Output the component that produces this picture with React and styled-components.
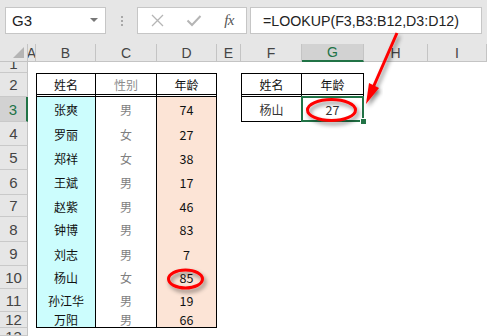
import styled, { createGlobalStyle } from "styled-components";

const GlobalStyle = createGlobalStyle`
  html, body { margin: 0; padding: 0; background: #fff; }
  body { font-family: "Liberation Sans", Arial, sans-serif; }
  * { box-sizing: border-box; }
`;

const COLS = ["A", "B", "C", "D", "E", "F", "G", "H", "I"];
const COL_W = "28px 8px 60px 61px 60px 24px 61px 62px 64px 1fr";
const ROW_H = "18px 11px 24px 25px 24px 24px 25px 22px 25px 24px 23px 23px 16px 1fr";

const people = [
  ["张爽", "男", 74],
  ["罗丽", "女", 27],
  ["郑祥", "女", 38],
  ["王斌", "男", 17],
  ["赵紫", "男", 46],
  ["钟博", "男", 83],
  ["刘志", "男", 7],
  ["杨山", "女", 85],
  ["孙江华", "男", 19],
  ["万阳", "男", 66],
];

const App = () => {
  return (
    <>
      <GlobalStyle />
      <Window>
        <TopBar>
          <NameBox>
            G3
            <Caret />
          </NameBox>
          <Grip>
            <i />
            <i />
            <i />
          </Grip>
          <IconBox>
            <svg width="13" height="13" viewBox="0 0 13 13">
              <path d="M1 1 L12 12 M12 1 L1 12" stroke="#b5b5b5" strokeWidth="1.3" fill="none" />
            </svg>
            <svg width="16" height="13" viewBox="0 0 16 13">
              <path d="M1.5 6.5 L6 11 L14.5 2" stroke="#b5b5b5" strokeWidth="2" fill="none" />
            </svg>
            <Fx>fx</Fx>
          </IconBox>
          <FormulaBox>=LOOKUP(F3,B3:B12,D3:D12)</FormulaBox>
        </TopBar>

        <Sheet>
          <Corner>
            <svg width="11" height="11" viewBox="0 0 11 11">
              <polygon points="11,0 11,11 0,11" fill="#b4b4b4" />
            </svg>
          </Corner>
          {COLS.map((c) => (
            <ColHead key={c} $active={c === "G"}>
              {c}
            </ColHead>
          ))}
          {Array.from({ length: 13 }, (_, i) => i + 1).map((n) => (
            <RowHead
              key={n}
              $active={n === 3}
              $align={n === 1 ? "flex-end" : n === 13 ? "flex-start" : "center"}
            >
              <span>{n}</span>
            </RowHead>
          ))}

          <DataTable $cols="60px 61px 60px" style={{ gridColumn: "3 / 6", gridRow: "3 / 14" }}>
            <Cell $first $head>姓名</Cell>
            <Cell $head $color="#8c8c8c">性别</Cell>
            <Cell $head>年龄</Cell>
            {people.map(([name, sex, age], i) => {
              const last = i === people.length - 1;
              return [
                <Cell key={name + "n"} $first $last={last} $bg="#ccfdfd">{name}</Cell>,
                <Cell key={name + "s"} $last={last} $color="#7f7f7f">{sex}</Cell>,
                <Cell key={name + "a"} $last={last} $bg="#fce4d6" $num>{age}</Cell>,
              ];
            })}
          </DataTable>

          <DataTable $cols="61px 62px" style={{ gridColumn: "7 / 9", gridRow: "3 / 5" }}>
            <Cell $first $head>姓名</Cell>
            <Cell $head>年龄</Cell>
            <Cell $first $last $color="#333">杨山</Cell>
            <Cell $last $num $color="#333">
              27
              <Selection>
                <Handle />
              </Selection>
            </Cell>
          </DataTable>
        </Sheet>

        <Marks width="487" height="336" viewBox="0 0 487 336">
          <defs>
            <filter id="sh" x="-30%" y="-30%" width="160%" height="160%">
              <feDropShadow dx="2" dy="3" stdDeviation="2" floodColor="#000" floodOpacity="0.45" />
            </filter>
          </defs>
          <g filter="url(#sh)" fill="none" stroke="#ff0000" strokeWidth="3">
            <line x1="397" y1="33" x2="372" y2="90" />
            <ellipse cx="185.5" cy="279" rx="17" ry="9" />
            <ellipse cx="331.5" cy="110" rx="24" ry="10.5" />
          </g>
          <polygon filter="url(#sh)" points="366,104 379,88 369,83" fill="#ff0000" />
        </Marks>
      </Window>
    </>
  );
};

export default App;

// css starts from here

const Window = styled.div`
  position: relative;
  width: 487px;
  height: 336px;
  overflow: hidden;
  background: #fff;
`;

const TopBar = styled.div`
  display: flex;
  align-items: flex-start;
  height: 44px;
  padding: 7px 5px 0 5px;
  background: #e6e6e6;
`;

const Box = styled.div`
  height: 27px;
  background: #fff;
  border: 1px solid #c6c6c6;
  display: flex;
  align-items: center;
`;

const NameBox = styled(Box)`
  position: relative;
  width: 101px;
  padding-left: 6px;
  font-size: 15px;
  color: #222;
`;

const Caret = styled.span`
  position: absolute;
  right: 7px;
  top: 10px;
  border-left: 4px solid transparent;
  border-right: 4px solid transparent;
  border-top: 4px solid #777;
`;

const Grip = styled.div`
  width: 31px;
  height: 27px;
  display: flex;
  flex-direction: column;
  align-items: center;
  justify-content: center;
  gap: 2px;

  i {
    width: 2px;
    height: 2px;
    background: #a8a8a8;
  }
`;

const IconBox = styled(Box)`
  width: 110px;
  padding: 0 12px 0 13px;
  justify-content: space-between;
`;

const Fx = styled.span`
  font-family: "Liberation Serif", "Times New Roman", serif;
  font-style: italic;
  font-size: 15px;
  color: #555;
  letter-spacing: -0.5px;
`;

const FormulaBox = styled(Box)`
  flex: 1;
  margin-left: 3px;
  padding-left: 12px;
  font-size: 14.2px;
  color: #222;
`;

const Sheet = styled.div`
  display: grid;
  grid-template-columns: ${COL_W};
  grid-template-rows: ${ROW_H};
  height: 292px;
  background: #fff;
`;

const Corner = styled.div`
  background: #e6e6e6;
  border-right: 1px solid #c4c4c4;
  border-bottom: 1px solid #c4c4c4;
  display: flex;
  align-items: flex-end;
  justify-content: flex-end;
  padding: 0 3px 3px 0;
`;

const ColHead = styled.div`
  display: flex;
  align-items: center;
  justify-content: center;
  overflow: hidden;
  font-size: 14px;
  color: ${(p) => (p.$active ? "#217346" : "#444")};
  background: ${(p) => (p.$active ? "#d2d2d2" : "#e6e6e6")};
  border-right: 1px solid #c4c4c4;
  border-bottom: ${(p) => (p.$active ? "2px solid #217346" : "1px solid #c4c4c4")};
`;

const RowHead = styled.div`
  grid-column: 1;
  display: flex;
  justify-content: center;
  align-items: ${(p) => p.$align};
  overflow: hidden;
  font-size: 15px;
  color: ${(p) => (p.$active ? "#217346" : "#444")};
  background: ${(p) => (p.$active ? "#d2d2d2" : "#e6e6e6")};
  border-bottom: 1px solid #c9c9c9;
  border-right: ${(p) => (p.$active ? "2px solid #217346" : "1px solid #c4c4c4")};

  span {
    line-height: 17px;
    flex-shrink: 0;
  }
`;

const DataTable = styled.div`
  display: grid;
  grid-template-columns: ${(p) => p.$cols};
  grid-template-rows: subgrid;
`;

const Cell = styled.div`
  position: relative;
  display: flex;
  align-items: center;
  justify-content: center;
  font-family: "Noto Sans CJK SC", "Liberation Sans", sans-serif;
  font-size: ${(p) => (p.$num ? "12.5px" : "12px")};
  color: ${(p) => p.$color || "#111"};
  background: ${(p) => p.$bg || "#fff"};
  border-right: 1px solid #000;
  border-left: ${(p) => (p.$first ? "1px solid #000" : "none")};
  border-top: ${(p) => (p.$head ? "1px solid #000" : "none")};
  border-bottom: ${(p) =>
    p.$head ? "3px double #000" : p.$last ? "1px solid #000" : "none"};
`;

const Selection = styled.div`
  position: absolute;
  left: -1px;
  top: -1px;
  right: -1px;
  bottom: -1px;
  border: 2px solid #217346;
`;

const Handle = styled.div`
  position: absolute;
  right: -4px;
  bottom: -4px;
  width: 5px;
  height: 5px;
  background: #217346;
  outline: 1px solid #fff;
`;

const Marks = styled.svg`
  position: absolute;
  left: 0;
  top: 0;
  pointer-events: none;
`;
